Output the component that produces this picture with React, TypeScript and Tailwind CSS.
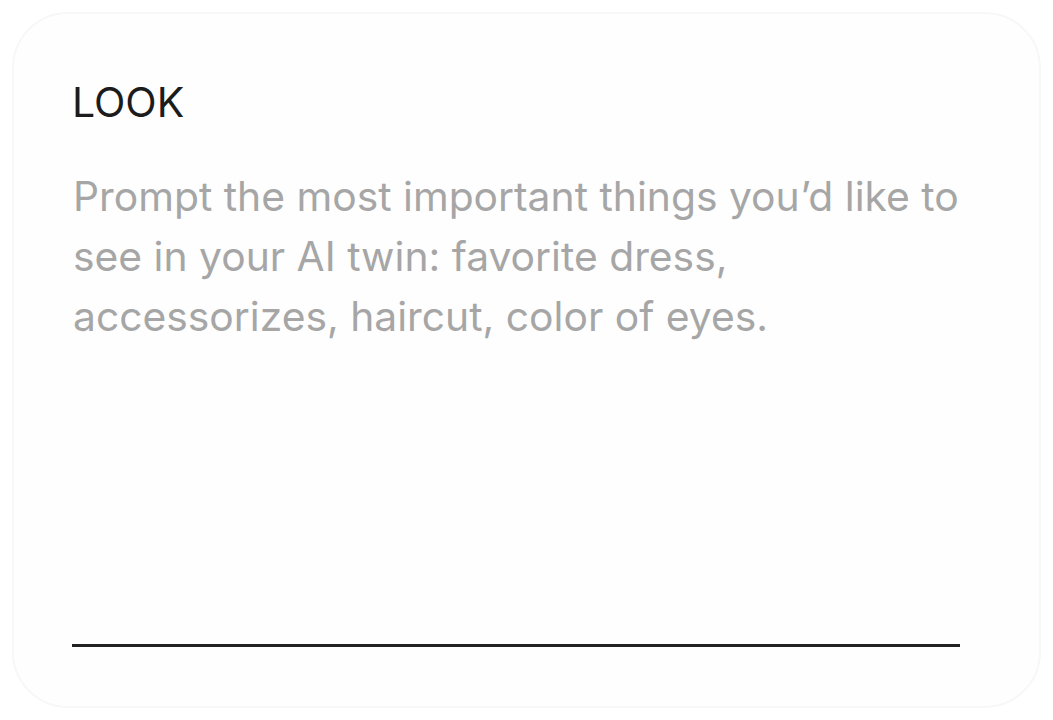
import React from "react";

export default function App() {
  return (
    <div className="w-[1053px] h-[720px] bg-white p-[12px]" style={{ fontFamily: "Inter, 'Noto Sans', sans-serif" }}>
      <div className="w-[1029px] h-[696px] rounded-[56px] border-[2px] border-[#f7f7f7] bg-[#fefefe] px-[58px] pt-[60px] pb-[59px] flex flex-col">
        <div className="text-[41px] leading-[56px] text-[#1c1c1c]">LOOK</div>
        <p className="mt-[36px] ml-[1px] text-[40.8px] leading-[60px] text-[#a6a6a6]">
          Prompt the most important things you’d like to see in your AI twin: favorite dress, accessorizes, haircut, color of eyes.
        </p>
        <div className="mt-auto w-[888px] h-[3px] bg-[#222222]" />
      </div>
    </div>
  );
}
